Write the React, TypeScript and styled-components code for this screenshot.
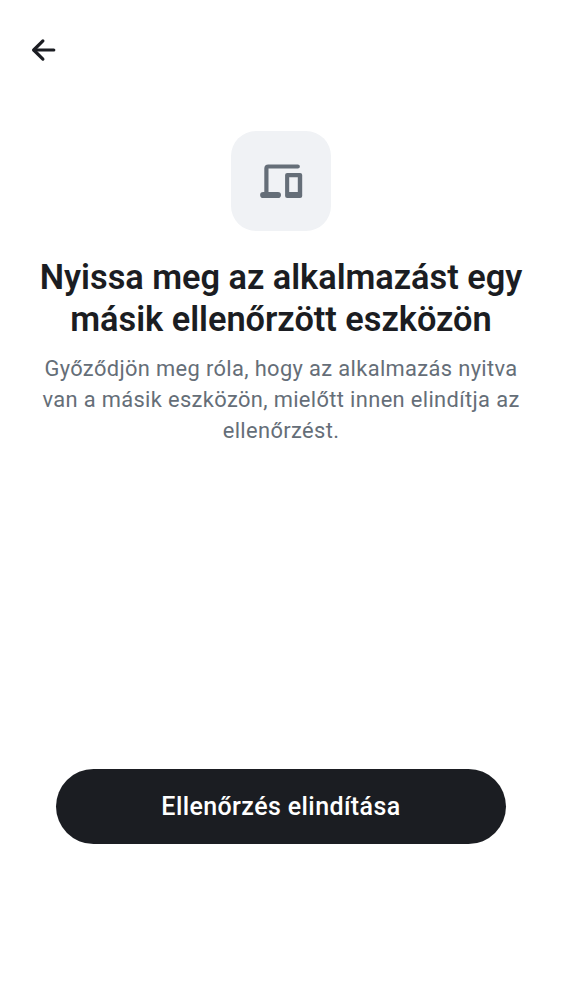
import React from "react";
import styled, { createGlobalStyle } from "styled-components";

const GlobalStyle = createGlobalStyle`
  * { box-sizing: border-box; }
  body { margin: 0; background: #fff; font-family: Roboto, sans-serif; }
`;

const Screen = styled.main`
  display: flex;
  flex-direction: column;
  width: 562px;
  height: 1000px;
  background: #ffffff;
`;

const TopBar = styled.header`
  display: flex;
  align-items: center;
  height: 100px;
  padding-left: 25px;
`;

const BackButton = styled.button`
  display: flex;
  padding: 0;
  border: 0;
  background: none;
  color: #1b1d22;
`;

const Content = styled.section`
  display: flex;
  flex: 1;
  flex-direction: column;
  align-items: center;
  padding-top: 31px;
`;

const IconTile = styled.div`
  display: flex;
  align-items: center;
  justify-content: center;
  width: 100px;
  height: 100px;
  border-radius: 25px;
  background: #f0f2f5;
  color: #656e78;
`;

const Title = styled.h1`
  margin: 25px 0 0;
  color: #1b1d22;
  font-size: 34.375px;
  font-weight: 600;
  line-height: 42px;
  letter-spacing: -0.03px;
  text-align: center;
  white-space: nowrap;
`;

const Description = styled.p`
  margin: 13px 0 0;
  color: #656e78;
  font-size: 21.875px;
  line-height: 31px;
  letter-spacing: 0.36px;
  text-align: center;
  white-space: nowrap;
`;

const Footer = styled.footer`
  padding: 0 56px 156px;
`;

const PrimaryButton = styled.button`
  width: 450px;
  height: 75px;
  padding: 0;
  border: 0;
  border-radius: 38px;
  background: #1b1d22;
  color: #ffffff;
  font-family: inherit;
  font-size: 25px;
  font-weight: 500;
  letter-spacing: 0.4px;
`;

export default function App() {
  return (
    <>
      <GlobalStyle />
      <Screen>
        <TopBar>
          <BackButton aria-label="Vissza">
            <svg width="38" height="38" viewBox="0 0 38 38" fill="none" stroke="currentColor" strokeWidth="3.2" strokeLinecap="round" strokeLinejoin="round">
              <path d="M17.9 9.9 8.7 19 17.9 28.1" />
              <path d="M9 19H28.8" />
            </svg>
          </BackButton>
        </TopBar>
        <Content>
          <IconTile>
            <svg width="50" height="50" viewBox="0 0 50 50" fill="currentColor">
              <path fillRule="evenodd" d="M12.3 8.4H41.8a2.1 2.1 0 0 1 0 4.2H12.5V35.9H21.9a3.1 3.1 0 0 1 0 6.2H7.2a3.1 3.1 0 0 1 0-6.2H8.3V12.5a4.1 4.1 0 0 1 4-4.1ZM31.2 16.9H44.1a2.1 2.1 0 0 1 2.1 2.1V40a2.1 2.1 0 0 1-2.1 2.1H31.2A2.1 2.1 0 0 1 29.1 40V19a2.1 2.1 0 0 1 2.1-2.1ZM33.2 21.2V35.9H41.8V21.2Z" />
            </svg>
          </IconTile>
          <Title>
            Nyissa meg az alkalmazást egy<br />másik ellenőrzött eszközön
          </Title>
          <Description>
            Győződjön meg róla, hogy az alkalmazás nyitva<br />
            van a másik eszközön, mielőtt innen elindítja az<br />
            ellenőrzést.
          </Description>
        </Content>
        <Footer>
          <PrimaryButton>Ellenőrzés elindítása</PrimaryButton>
        </Footer>
      </Screen>
    </>
  );
}
